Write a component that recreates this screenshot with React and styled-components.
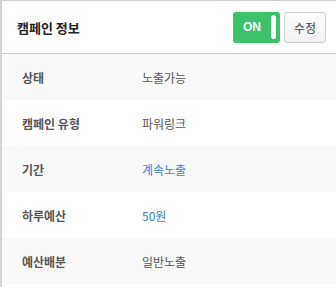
import React from "react";
import styled, { createGlobalStyle } from "styled-components";

const GlobalStyle = createGlobalStyle`
  body {
    margin: 0;
    background: #fff;
    font-family: "Noto Sans CJK KR", "Noto Sans", sans-serif;
  }
`;

const Panel = styled.div`
  width: 336px;
  height: 287px;
  box-sizing: border-box;
  border-top: 1px solid #cfcfcf;
  border-left: 2px solid #d4d4d4;
  background: #fff;
  overflow: hidden;
`;

const Header = styled.div`
  display: flex;
  align-items: center;
  justify-content: space-between;
  height: 52px;
  padding: 0 10px 0 15px;
  border-bottom: 1px solid #cccccc;
`;

const Title = styled.h2`
  margin: 0;
  font-size: 13px;
  font-weight: 700;
  color: #222;
`;

const Actions = styled.div`
  display: flex;
  gap: 4px;
`;

const Toggle = styled.button`
  display: flex;
  align-items: center;
  width: 47px;
  height: 31px;
  padding: 0 4px 0 10px;
  border: none;
  border-radius: 3px;
  background: #3cc26a;
  color: #fff;
  font-family: "Liberation Sans", Arial, sans-serif;
  font-size: 12px;
  font-weight: 700;
  box-sizing: border-box;
`;

const Knob = styled.span`
  margin-left: auto;
  width: 5px;
  height: 24px;
  border-radius: 3px;
  background: #fff;
`;

const EditButton = styled.button`
  width: 42px;
  height: 31px;
  border: 1px solid #cfcfcf;
  border-radius: 3px;
  background: linear-gradient(#fdfdfd, #f1f1f1);
  color: #444;
  font-family: "Noto Sans CJK KR", sans-serif;
  font-size: 12px;
  padding: 0;
`;

const Row = styled.div`
  display: flex;
  align-items: center;
  height: 46px;
  padding-left: 20px;
  background: ${(p) => (p.$shaded ? "#f9f9f9" : "#fff")};
`;

const Label = styled.div`
  width: 120px;
  font-size: 12px;
  font-weight: 700;
  color: #555;
`;

const Value = styled.div`
  font-size: 12px;
  color: ${(p) => (p.$link ? "#3b7ddd" : "#555")};
`;

const rows = [
  { label: "상태", value: "노출가능" },
  { label: "캠페인 유형", value: "파워링크" },
  { label: "기간", value: "계속노출", link: true },
  { label: "하루예산", value: "50원", link: true },
  { label: "예산배분", value: "일반노출" },
];

export default function App() {
  return (
    <>
      <GlobalStyle />
      <Panel>
        <Header>
          <Title>캠페인 정보</Title>
          <Actions>
            <Toggle>
              ON
              <Knob />
            </Toggle>
            <EditButton>수정</EditButton>
          </Actions>
        </Header>
        {rows.map((r, i) => (
          <Row key={r.label} $shaded={i % 2 === 0}>
            <Label>{r.label}</Label>
            <Value $link={r.link}>{r.value}</Value>
          </Row>
        ))}
      </Panel>
    </>
  );
}
